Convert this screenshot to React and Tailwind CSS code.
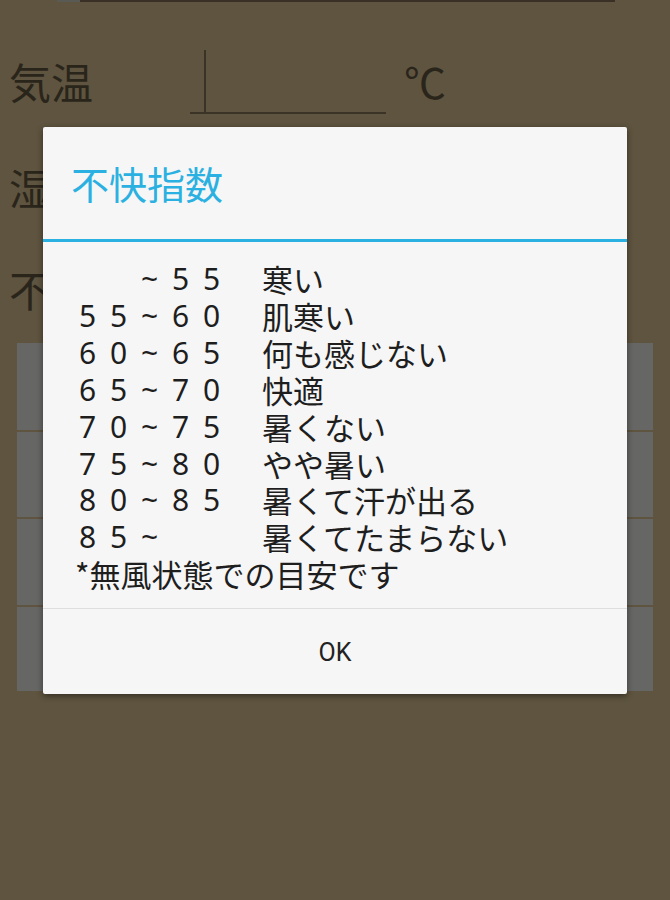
import React from "react";

const rows = [
  ["  ~55", "寒い"],
  ["55~60", "肌寒い"],
  ["60~65", "何も感じない"],
  ["65~70", "快適"],
  ["70~75", "暑くない"],
  ["75~80", "やや暑い"],
  ["80~85", "暑くて汗が出る"],
  ["85~  ", "暑くてたまらない"],
];

const font = { fontFamily: '"Noto Sans CJK JP", "Noto Sans", sans-serif' };
const digitFont = { fontFamily: '"Noto Sans", "Open Sans", sans-serif' };

export default function App() {
  return (
    <div
      className="relative w-[670px] h-[900px] overflow-hidden bg-[#5e543f] text-[#2a251b]"
      style={font}
    >
      {/* background page */}
      <div className="flex h-[2px]">
        <div className="ml-[57px] w-[23px] bg-[#5a5a55]" />
        <div className="w-[535px] bg-[#3a3026]" />
      </div>

      <div className="flex items-center h-[66px] mt-[46px]">
        <div className="ml-[9px] w-[181px] text-[42px] leading-none">気温</div>
        <div className="w-[196px] h-[66px] border-b-2 border-[#3a3326] flex flex-col justify-end">
          <div className="ml-[14px] h-[62px] border-l-2 border-[#3a3326]" />
        </div>
        <div className="ml-[18px] text-[42px] leading-none">℃</div>
      </div>

      <div className="flex items-center h-[66px] mt-[40px]">
        <div className="ml-[9px] text-[42px] leading-none">湿度</div>
      </div>

      <div className="flex items-center h-[66px] mt-[36px]">
        <div className="ml-[9px] text-[42px] leading-none">不快指数</div>
      </div>

      <div className="mx-[17px] mt-[21px] flex flex-col gap-[2px]">
        <div className="h-[87px] bg-[#666664]" />
        <div className="h-[85px] bg-[#666664]" />
        <div className="h-[86px] bg-[#666664]" />
        <div className="h-[84px] bg-[#666664]" />
      </div>

      {/* dialog */}
      <div className="absolute left-[43px] top-[127px] w-[584px] h-[567px] bg-[#f6f6f6] rounded-[2px] shadow-[0_2px_6px_rgba(0,0,0,0.45)] flex flex-col">
        <div className="h-[112px] flex items-center pl-[28px] text-[38px] text-[#2bb1e1] leading-none">
          不快指数
        </div>
        <div className="h-[3px] bg-[#2bb1e1]" />
        <div className="pl-[36px] pt-[19px] pb-[15px] text-[31px] leading-[36.9px] text-[#1e1e1e]">
          {rows.map(([a, b]) => (
            <div key={b} className="flex">
              {a.split("").map((c, i) => (
                <span key={i} className="w-[31px] text-[30px]" style={digitFont}>
                  {c === " " ? "\u00a0" : c}
                </span>
              ))}
              <span className="w-[28px]" />
              <span>{b}</span>
            </div>
          ))}
          <div className="-ml-[4px] whitespace-pre">*無風状態での目安です</div>
        </div>
        <div className="h-px bg-[#dedede]" />
        <div
          className="flex-1 flex items-center justify-center pt-[3px] text-[25px] text-[#222]"
          style={{ fontFamily: '"Roboto", "Noto Sans", sans-serif' }}
        >
          OK
        </div>
      </div>
    </div>
  );
}
